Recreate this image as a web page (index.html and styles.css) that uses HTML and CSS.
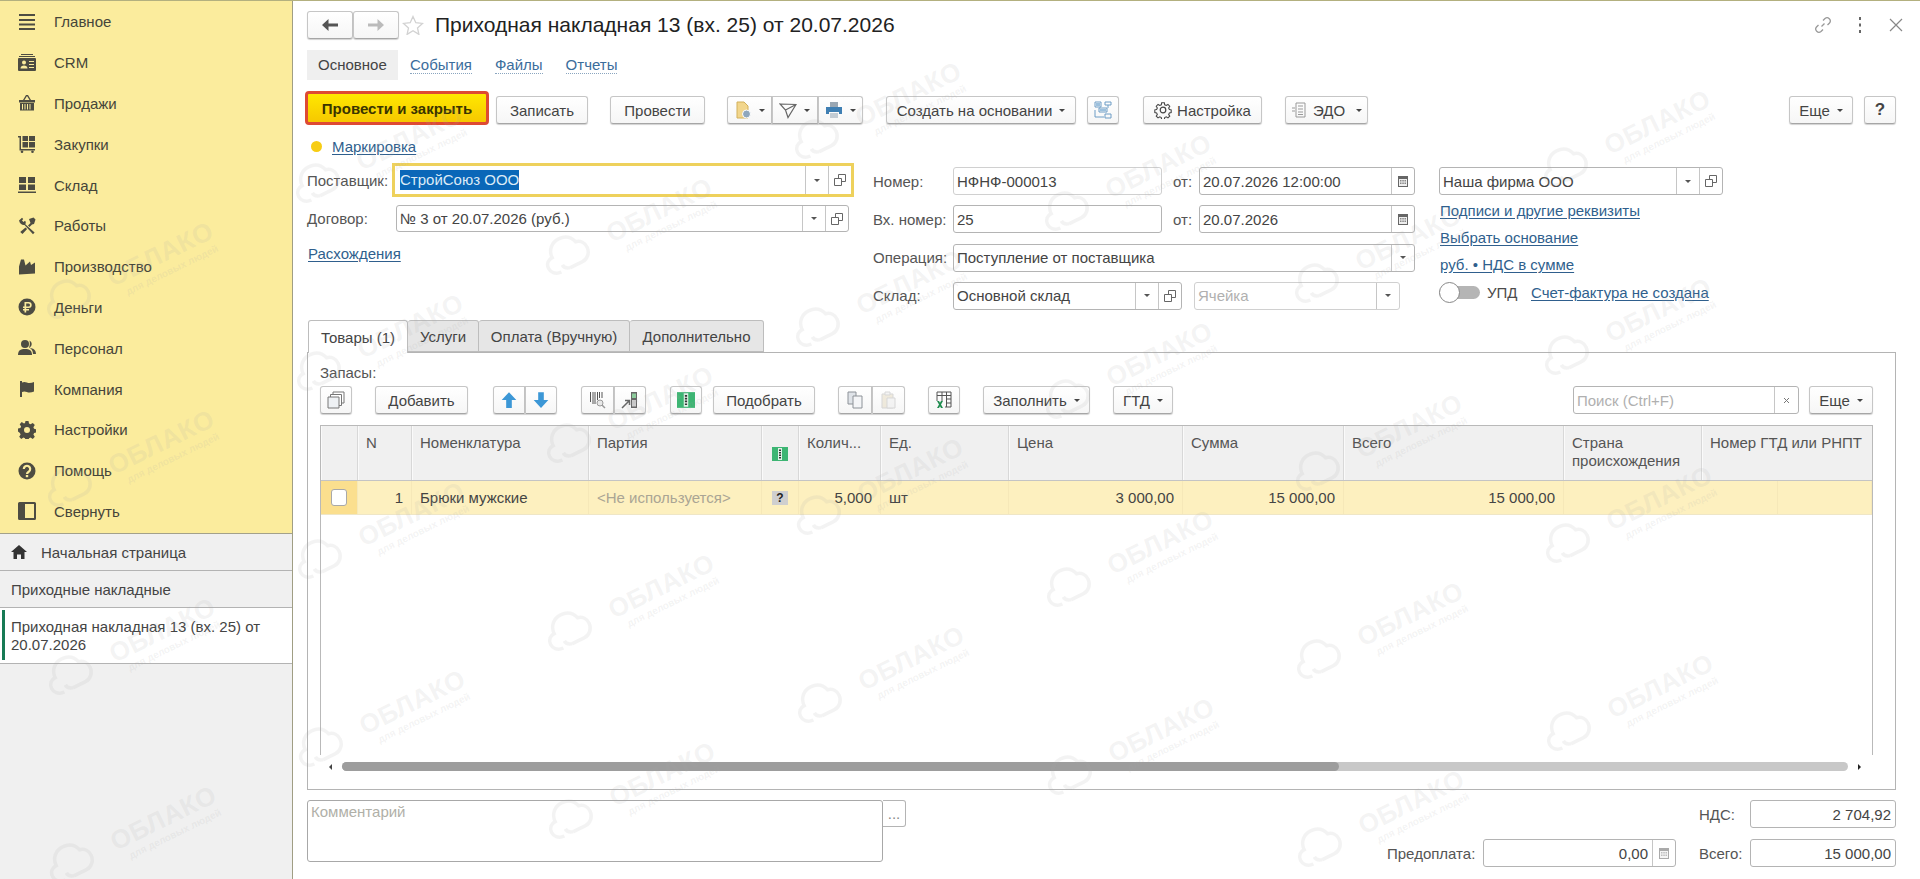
FILE: index.html
```html
<!DOCTYPE html>
<html lang="ru">
<head>
  <meta charset="UTF-8">
  <title>Приходная накладная 13</title>
  <link rel="stylesheet" href="styles.css">
</head>
<body>

  <aside class="sidebar">
    <nav class="menu">
      <a class="menu-item"><svg class="menu-icon" viewBox="0 0 18 18"><path d="M1 1h16v2H1zM1 6h16v2H1zM1 10.500h16v2H1zM1 15h16v2H1z"/></svg>Главное</a>
      <a class="menu-item"><svg class="menu-icon" viewBox="0 0 18 18"><path d="M3 0h12v1H3zM1 2h16v1H1z"/><path fill-rule="evenodd" d="M1 4h16a1 1 0 0 1 1 1v11a1 1 0 0 1-1 1H1a1 1 0 0 1-1-1V5a1 1 0 0 1 1-1zm5 2.500a2 2 0 1 0 0 4 2 2 0 0 0 0-4zM2.500 14.500h7c0-2-1.500-3-3.500-3s-3.500 1-3.500 3zM11 7v1h5V7zm0 3v1h5v-1zm0 3v1h5v-1z"/></svg>CRM</a>
      <a class="menu-item"><svg class="menu-icon" viewBox="0 0 18 18"><path d="M5 6l3-5h2l3 5h-1.500L9 2 6.500 6z"/><path fill-rule="evenodd" d="M1 6h16v2.500H1zM2 9h14v7.500H2zm2 1v5.500h1V10zm2.500 0v5.500h1V10zm2.500 0v5.500h1V10zm2.500 0v5.500h1V10z"/></svg>Продажи</a>
      <a class="menu-item"><svg class="menu-icon" viewBox="0 0 18 18"><path d="M0 1h3v13h14v1.500H1.500V2.500H0z"/><path d="M4.500 1h5.500v5H4.500zM11 1h6v5h-6zM4.500 7h5.500v5.500H4.500zM11 7h6v5.500h-6z"/><circle cx="4" cy="16.700" r="1.300"/><circle cx="14.500" cy="16.700" r="1.300"/></svg>Закупки</a>
      <a class="menu-item"><svg class="menu-icon" viewBox="0 0 18 18"><path d="M1 1h7v6H1zM10 1h7v6h-7zM1 8.500h7v5.500H1zM10 8.500h7v5.500h-7zM0 15.500h18V17H0z"/></svg>Склад</a>
      <a class="menu-item"><svg class="menu-icon" viewBox="0 0 18 18"><path d="M1 3.500L4 .8l1.200 1.200L4 3.500 5.500 5l1.500-1.200c1 1 1 2.400.3 3.400l9.300 8.300-1.600 1.700-8.500-9.200C5 8.500 2 7.500 1 3.500z"/><path d="M11 2l4.500-1.500 2 2L16 7l-2 .5-2.500 2.500-1.500-1.500L12.500 6zM7.500 10.500l1.600 1.600-4.600 5-2.300-2.200z"/></svg>Работы</a>
      <a class="menu-item"><svg class="menu-icon" viewBox="0 0 18 18"><path d="M1 16.500V8.500L3 1.500h3l1.500 6 4.500-4 1 3.500 4-2.500v11z"/></svg>Производство</a>
      <a class="menu-item"><svg class="menu-icon" viewBox="0 0 18 18"><circle cx="9" cy="9" r="8.500"/><path fill="#fbec9d" d="M6.500 4h4.200a3 3 0 0 1 0 6H8.200v1H11v1.400H8.200V14.500H6.500v-2.100H5V11h1.500v-1H5V8.500h1.500zm1.700 1.500v3h2.300a1.500 1.500 0 0 0 0-3z"/></svg>Деньги</a>
      <a class="menu-item"><svg class="menu-icon" viewBox="0 0 18 18"><circle cx="7" cy="5" r="4"/><path d="M0 16c0-4.500 2.500-6 7-6s7 1.500 7 6z"/><path d="M11.500 1.500a4 4 0 0 1 0 7.200c3.500.6 6.500 2 6.500 6.300h-3c0-3-1.500-5.500-4-6.500 1-2 1-4.500.5-7z"/></svg>Персонал</a>
      <a class="menu-item"><svg class="menu-icon" viewBox="0 0 18 18"><path d="M2 1h2v16H2z"/><path d="M4 2.500c3-1.500 5 .5 7.500.5 1.500 0 3-.5 4.500-1v9.500c-1.500.5-3 1-4.500 1-2.500 0-4.500-2-7.500-.5z"/></svg>Компания</a>
      <a class="menu-item"><svg class="menu-icon" viewBox="0 0 18 18"><path fill-rule="evenodd" d="M7.500 0h3l.5 2.600 1.500.7 2.300-1.400 2 2.100-1.400 2.200.7 1.600 2.400.7v3l-2.400.5-.7 1.600 1.400 2.200-2 2.100-2.300-1.400-1.500.7-.5 2.600h-3l-.5-2.600-1.500-.7-2.300 1.400-2-2.100 1.400-2.200-.7-1.600L0 10.500v-3l2.400-.5.7-1.600-1.400-2.200 2-2.100L6 2.500l1-.5zM9 6a3 3 0 1 0 0 6 3 3 0 0 0 0-6z"/></svg>Настройки</a>
      <a class="menu-item"><svg class="menu-icon" viewBox="0 0 18 18"><circle cx="9" cy="9" r="8.500"/><path fill="none" stroke="#fbec9d" stroke-width="2.200" d="M5.800 7a3.200 3.200 0 1 1 4.900 2.700c-1.100.7-1.700 1.200-1.700 2.300"/><path fill="#fbec9d" d="M7.800 13h2.400v2.200H7.800z"/></svg>Помощь</a>
      <a class="menu-item"><svg class="menu-icon" viewBox="0 0 18 18"><path fill-rule="evenodd" d="M1.500 0h15A1.500 1.500 0 0 1 18 1.500v15a1.500 1.500 0 0 1-1.500 1.500h-15A1.500 1.500 0 0 1 0 16.500v-15A1.500 1.500 0 0 1 1.500 0zM7 2v14h9V2z"/></svg>Свернуть</a>
    </nav>
    <div class="open-list">
      <a class="open-item"><svg class="home-icon" viewBox="0 0 16 14"><path d="M8 0l8 7h-2.500v7h-3.500v-4.500H6V14H2.500V7H0z"/></svg>Начальная страница</a>
      <a class="open-item">Приходные накладные</a>
      <a class="open-item open-item-active">Приходная накладная 13 (вх. 25) от 20.07.2026</a>
    </div>
  </aside>

  <main class="main">
    <div class="title-row">
      <div class="nav-arrows">
        <button class="btn arrow-btn"><svg width="16" height="12" viewBox="0 0 16 12"><path fill="#555" d="M6.500 0v4.500H16v3H6.500V12L0 6z"/></svg></button>
        <button class="btn arrow-btn arrow-off"><svg width="16" height="12" viewBox="0 0 16 12"><path fill="#bbb" d="M9.500 0v4.500H0v3h9.500V12L16 6z"/></svg></button>
      </div>
      <svg class="star" viewBox="0 0 22 20"><path fill="none" stroke="#d2d2d2" stroke-width="1.300" d="M11 1.500l2.800 6.200 6.700.7-5 4.500 1.400 6.500L11 15.700l-5.900 3.700 1.400-6.500-5-4.500 6.700-.7z"/></svg>
      <h1 class="doc-title">Приходная накладная 13 (вх. 25) от 20.07.2026</h1>
      <div class="window-tools">
        <svg class="tool-link" viewBox="0 0 18 18"><path fill="none" stroke="#999" stroke-width="1.300" d="M7.500 10.500l3-3M9 4.500l2-2a3.200 3.200 0 0 1 4.500 4.500l-2 2M9 13.500l-2 2A3.200 3.200 0 0 1 2.500 11l2-2"/></svg>
        <svg class="tool-dots" viewBox="0 0 4 16"><path fill="#666" d="M1 0h2v3H1zM1 6.500h2v3H1zM1 13h2v3H1z"/></svg>
        <svg class="tool-close" viewBox="0 0 14 14"><path fill="none" stroke="#888" stroke-width="1.200" d="M1 1l12 12M13 1L1 13"/></svg>
      </div>
    </div>

    <div class="section-tabs">
      <a class="section-tab section-tab-active">Основное</a>
      <a class="section-tab st-events">События</a>
      <a class="section-tab st-files">Файлы</a>
      <a class="section-tab st-reports">Отчеты</a>
    </div>

    <div class="commands">
      <button class="btn btn-primary">Провести и закрыть</button>
      <button class="btn c-save">Записать</button>
      <button class="btn c-post">Провести</button>
      <div class="btn-group c-group">
        <button class="btn btn-icon-caret"><svg class="ico" viewBox="0 0 18 18"><path fill="#f2d68c" stroke="#d2b05a" d="M3 1h7l4 4v12H3z"/><circle cx="12.500" cy="13" r="4" fill="#8fa7bd" stroke="#fff"/></svg><i class="caret"></i></button>
        <button class="btn btn-icon-caret"><svg class="ico" viewBox="0 0 18 18"><path fill="none" stroke="#666" stroke-width="1.200" d="M1 3l16 .5-8 13-2.500-7.500zM6.500 9L17 3.500"/></svg><i class="caret"></i></button>
        <button class="btn btn-icon-caret"><svg class="ico" viewBox="0 0 18 18"><path fill="#9aa7b3" d="M5 1h8v5H5z"/><path fill="#3f7fb3" d="M1 6h16v7h-3v-2H4v2H1z"/><path fill="#c3ccd4" d="M5 12h8v5H5z"/></svg><i class="caret"></i></button>
      </div>
      <button class="btn c-create">Создать на основании<i class="caret"></i></button>
      <button class="btn btn-square c-struct"><svg class="ico" viewBox="0 0 18 18"><path fill="none" stroke="#6d9cc5" d="M1 1h6v5H1zM11 1h6v3h-6zM5 7h8v4H5zM11 13h6v4h-6zM1 9v7h9M14 4v3"/><path fill="#9cc0dd" d="M2 2h4v3H2zM6 8h6v2H6z"/></svg></button>
      <button class="btn c-settings"><svg class="ico" viewBox="0 0 18 18"><path fill="none" stroke="#444" stroke-width="1.200" d="M7.500 1h3l.4 2.200 1.700.8 1.900-1.200 2 2-1.200 1.900.8 1.700 2 .4v3l-2 .4-.8 1.700 1.200 1.900-2 2-1.900-1.200-1.700.8-.4 2.200h-3l-.4-2.200-1.700-.8-1.900 1.200-2-2 1.200-1.900-.8-1.700-2-.4v-3l2-.4.8-1.700-1.200-1.900 2-2 1.900 1.200 1.700-.8z" transform="translate(.9 .9) scale(.9)"/><circle cx="9" cy="9" r="2.800" fill="none" stroke="#444" stroke-width="1.200"/></svg>Настройка</button>
      <button class="btn c-edo"><svg class="ico" viewBox="0 0 18 18"><path fill="none" stroke="#999" d="M5 2h9v14H5zM7 5h5M7 8h5M7 11h5M7 13.500h5M1 7h3M1 10h3"/></svg>ЭДО<i class="caret"></i></button>
      <button class="btn c-more">Еще<i class="caret"></i></button>
      <button class="btn btn-square c-help"><b>?</b></button>
    </div>

    <div class="mark-row">
      <i class="mark-dot"></i>
      <a class="link">Маркировка</a>
    </div>

    <div class="form">
      <div class="form-col col-left">
        <div class="row-supplier">
          <label class="lbl lbl-supplier">Поставщик:</label>
          <div class="field field-focus">
            <span class="field-text"><span class="selected">СтройСоюз ООО</span></span>
            <span class="field-btn"><i class="caret"></i></span>
            <span class="field-btn"><svg class="open-ico" viewBox="0 0 12 12"><use href="#open"/></svg></span>
          </div>
        </div>
        <div class="row-contract">
          <label class="lbl lbl-contract">Договор:</label>
          <div class="field field-contract">
            <span class="field-text">№ 3 от 20.07.2026 (руб.)</span>
            <span class="field-btn"><i class="caret"></i></span>
            <span class="field-btn"><svg class="open-ico" viewBox="0 0 12 12"><use href="#open"/></svg></span>
          </div>
        </div>
        <a class="link link-diff">Расхождения</a>
      </div>

      <div class="form-col col-mid">
        <div class="mid-row">
          <label class="lbl lbl-mid">Номер:</label>
          <div class="field field-num field-readonly"><span class="field-text">НФНФ-000013</span></div>
          <label class="lbl lbl-from">от:</label>
          <div class="field field-date">
            <span class="field-text">20.07.2026 12:00:00</span>
            <span class="field-btn"><svg class="cal-ico" viewBox="0 0 12 12"><use href="#cal"/></svg></span>
          </div>
        </div>
        <div class="mid-row">
          <label class="lbl lbl-mid">Вх. номер:</label>
          <div class="field field-num"><span class="field-text">25</span></div>
          <label class="lbl lbl-from">от:</label>
          <div class="field field-date">
            <span class="field-text">20.07.2026</span>
            <span class="field-btn"><svg class="cal-ico" viewBox="0 0 12 12"><use href="#cal"/></svg></span>
          </div>
        </div>
        <div class="mid-row">
          <label class="lbl lbl-mid">Операция:</label>
          <div class="field field-op">
            <span class="field-text">Поступление от поставщика</span>
            <span class="field-btn"><i class="caret"></i></span>
          </div>
        </div>
        <div class="mid-row">
          <label class="lbl lbl-mid">Склад:</label>
          <div class="field field-store">
            <span class="field-text">Основной склад</span>
            <span class="field-btn"><i class="caret"></i></span>
            <span class="field-btn"><svg class="open-ico" viewBox="0 0 12 12"><use href="#open"/></svg></span>
          </div>
          <div class="field field-cell field-readonly">
            <span class="field-text placeholder">Ячейка</span>
            <span class="field-btn"><i class="caret"></i></span>
          </div>
        </div>
      </div>

      <div class="form-col col-right">
        <div class="field field-firm">
          <span class="field-text">Наша фирма ООО</span>
          <span class="field-btn"><i class="caret"></i></span>
          <span class="field-btn"><svg class="open-ico" viewBox="0 0 12 12"><use href="#open"/></svg></span>
        </div>
        <a class="link right-link">Подписи и другие реквизиты</a>
        <a class="link right-link">Выбрать основание</a>
        <a class="link right-link">руб. • НДС в сумме</a>
        <div class="upd-row">
          <span class="toggle"><i class="toggle-knob"></i></span>
          <span class="upd-label">УПД</span>
          <a class="link">Счет-фактура не создана</a>
        </div>
      </div>
    </div>

    <div class="page-tabs">
      <a class="page-tab page-tab-active pt-goods">Товары (1)</a>
      <a class="page-tab pt-services">Услуги</a>
      <a class="page-tab pt-pay">Оплата (Вручную)</a>
      <a class="page-tab pt-extra">Дополнительно</a>
    </div>

    <section class="panel">
      <div class="panel-title">Запасы:</div>
      <div class="table-bar">
        <button class="btn btn-square b-stack"><svg class="ico" viewBox="0 0 18 18"><path fill="#fff" stroke="#777" d="M6 1h11v11H6z"/><path fill="#fff" stroke="#777" d="M3.500 3.500h11v11h-11z"/><path fill="#eef1f4" stroke="#777" d="M1 6h11v11H1z"/></svg></button>
        <button class="btn b-add">Добавить</button>
        <div class="btn-group b-move">
          <button class="btn btn-square"><svg class="ico" viewBox="0 0 14 16"><path fill="#3c97d6" d="M7 1l6.500 7H9.500v7h-5V8H.5z"/></svg></button>
          <button class="btn btn-square"><svg class="ico" viewBox="0 0 14 16"><path fill="#3c97d6" d="M7 15L.5 8h4V1h5v7h4z"/></svg></button>
        </div>
        <div class="btn-group b-scan">
          <button class="btn btn-square"><svg class="ico" viewBox="0 0 18 18"><path stroke="#555" d="M2.500 1v10M5 1v12M7 1v12M9.500 1v8M11.500 1v6M14 1v6"/><circle cx="12" cy="12" r="3" fill="#e8e8e8" stroke="#999"/><path stroke="#999" stroke-width="1.500" d="M14 14l3 3"/></svg></button>
          <button class="btn btn-square"><svg class="ico" viewBox="0 0 18 18"><path fill="#666" d="M10 1h6v16h-6z"/><path fill="#8ccb9b" d="M11 2.500h4v4.500h-4z"/><path fill="#ccc" d="M11 9h4v6.500h-4z"/><path fill="none" stroke="#666" stroke-width="1.500" d="M1 17l7-7M4 9.500h4.500V14"/></svg></button>
        </div>
        <button class="btn btn-square b-money"><svg class="ico" viewBox="0 0 16 16"><use href="#money"/></svg></button>
        <button class="btn b-pick">Подобрать</button>
        <div class="btn-group b-clip">
          <button class="btn btn-square"><svg class="ico" viewBox="0 0 18 18"><path fill="#dfe3e8" stroke="#8d9298" d="M2 1h8v12H2z"/><path fill="#f4f5f7" stroke="#8d9298" d="M7 5h9v12H7z"/></svg></button>
          <button class="btn btn-square"><svg class="ico ico-off" viewBox="0 0 18 18"><path fill="#e6dcc4" stroke="#bbb" d="M3 3h11v14H3z"/><path fill="#eee" stroke="#bbb" d="M6 1h5v3H6zM8 7h8v10H8z"/></svg></button>
        </div>
        <button class="btn btn-square b-excel"><svg class="ico" viewBox="0 0 18 18"><path fill="none" stroke="#555" d="M2 1h14v15H10M2 1v9M2 4.500h14M7 1v9M11.500 1v15M11.500 8H16M11.500 12H16"/><path fill="#1d8c4e" d="M2 10h2l1 1.800L6 10h2l-2 3.500L8 17H6l-1-1.800L4 17H2l2-3.500z"/></svg></button>
        <button class="btn b-fill">Заполнить<i class="caret"></i></button>
        <button class="btn b-gtd">ГТД<i class="caret"></i></button>
        <div class="field field-search">
          <span class="field-text placeholder">Поиск (Ctrl+F)</span>
          <span class="field-btn"><svg class="clear-ico" viewBox="0 0 7 7"><path fill="none" stroke="#777" d="M1 1l5 5M6 1L1 6"/></svg></span>
        </div>
        <button class="btn b-more">Еще<i class="caret"></i></button>
      </div>

      <div class="grid-table">
        <div class="t-head">
          <div class="th"></div>
          <div class="th">N</div>
          <div class="th">Номенклатура</div>
          <div class="th">Партия</div>
          <div class="th th-icon"><svg class="money-ico" viewBox="0 0 16 16"><use href="#money"/></svg></div>
          <div class="th">Колич...</div>
          <div class="th">Ед.</div>
          <div class="th">Цена</div>
          <div class="th">Сумма</div>
          <div class="th">Всего</div>
          <div class="th">Страна происхождения</div>
          <div class="th">Номер ГТД или РНПТ</div>
        </div>
        <div class="t-row">
          <div class="td td-check"><i class="checkbox"></i></div>
          <div class="td td-num">1</div>
          <div class="td">Брюки мужские</div>
          <div class="td td-muted">&lt;Не используется&gt;</div>
          <div class="td td-center"><b class="unknown">?</b></div>
          <div class="td td-num">5,000</div>
          <div class="td">шт</div>
          <div class="td td-num">3 000,00</div>
          <div class="td td-num">15 000,00</div>
          <div class="td td-num">15 000,00</div>
          <div class="td"></div>
          <div class="td"></div>
        </div>
      </div>

      <div class="h-scroll">
        <i class="scroll-left"></i>
        <div class="scroll-track"><div class="scroll-thumb"></div></div>
        <i class="scroll-right"></i>
      </div>
    </section>

    <div class="footer">
      <div class="comment">Комментарий</div>
      <button class="comment-more">...</button>
      <div class="totals">
        <span class="total-blank"></span>
        <span class="total-blank"></span>
        <label class="lbl total-lbl">НДС:</label>
        <div class="field"><span class="field-text field-right">2 704,92</span></div>
        <label class="lbl">Предоплата:</label>
        <div class="field">
          <span class="field-text field-right">0,00</span>
          <span class="field-btn"><svg class="cal-ico ico-off" viewBox="0 0 12 12"><use href="#cal"/></svg></span>
        </div>
        <label class="lbl total-lbl">Всего:</label>
        <div class="field"><span class="field-text field-right">15 000,00</span></div>
      </div>
    </div>
  </main>

  <div class="watermarks" id="watermarks"></div>

  <svg class="defs" width="0" height="0">
    <symbol id="open" viewBox="0 0 12 12"><path fill="#fff" stroke="#666" d="M4.500 .5h7v7h-7z"/><path fill="#fff" stroke="#666" d="M.5 4.500h7v7h-7z"/></symbol>
    <symbol id="cal" viewBox="0 0 12 12"><path fill="#666" d="M1 1h10v11H1z"/><path fill="#eee" d="M2 4h8v7H2z"/><path fill="#888" d="M3 5h1.500v1.500H3zM5.300 5h1.500v1.500H5.300zM7.500 5H9v1.500H7.500zM3 7.500h1.500V9H3zM5.300 7.500h1.500V9H5.300zM7.500 7.500H9V9H7.500z"/></symbol>
    <symbol id="money" viewBox="0 0 16 16"><path fill="#3db573" d="M0 1h16v14H0z"/><path fill="#dff3e7" d="M6 2h4v12H6z"/><path fill="#333" d="M7 3.500h2V5H7zM7 6h2v1.500H7zM7 8.500h2V10H7zM7 11h2v1.500H7z"/></symbol>
    <symbol id="cloud" viewBox="0 0 48 38"><path fill="none" stroke="currentColor" stroke-width="3.500" d="M12 34C5 34 2 29 2 25c0-5 4-8 8-8 0-8 6-14 14-14 7 0 12 4 14 10 5 1 8 5 8 10 0 6-5 11-11 11H22M22 34c-4-1-6-3-6-6"/></symbol>
  </svg>

  <script src="watermarks.js"></script>
</body>
</html>
```

FILE: styles.css
```css
* {
  box-sizing: border-box;
}

body {
  margin: 0;
  height: 100vh;
  display: flex;
  overflow: hidden;
  position: relative;
  background: white;
  border-top: 1px solid #b3b07f;
  font-family: "Liberation Sans", Arial, sans-serif;
  font-size: 15px;
  color: #4b4b4b;
}

/* left menu */
.sidebar {
  width: 293px;
  flex: none;
  display: flex;
  flex-direction: column;
  background: #f0f0f0;
  border-right: 1px solid #a09e84;
}

.menu {
  background: #fbec9d;
  height: 533px;
  padding-top: 0.500px;
  display: grid;
  grid-auto-rows: 40.800px;
  border-bottom: 1px solid #a3a18a;
}

.menu-item {
  display: flex;
  align-items: center;
  gap: 18px;
  padding-left: 18px;
  color: #45453a;
}

.menu-icon {
  width: 18px;
  height: 18px;
  fill: #4d4c42;
}

.open-item {
  display: flex;
  align-items: center;
  height: 37px;
  padding: 0 24px 0 11px;
  border-bottom: 1px solid #b3b3b3;
  color: #444;
}

.home-icon {
  width: 16px;
  height: 14px;
  margin-right: 14px;
  fill: #333;
}

.open-item-active {
  height: 56px;
  background: white;
  line-height: 18px;
  position: relative;
}

.open-item-active::before {
  content: "";
  position: absolute;
  left: 2px;
  top: 2px;
  bottom: 3px;
  width: 3px;
  background: #177a55;
}

/* main form */
.main {
  flex: 1;
  min-width: 0;
  padding: 0 24px 0 14px;
}

.title-row {
  display: flex;
  align-items: center;
  height: 26px;
  margin-top: 11px;
}

.nav-arrows {
  display: flex;
  width: 83px;
}

.arrow-btn {
  flex: 1;
  height: 26px;
  padding: 0;
  border-radius: 3px 0 0 3px;
}

.arrow-off {
  border-radius: 0 3px 3px 0;
  border-left: none;
}

.star {
  width: 22px;
  height: 20px;
  margin-left: 12px;
}

.doc-title {
  margin: 0 0 0 11px;
  font-size: 21px;
  font-weight: normal;
  color: #222;
  white-space: nowrap;
}

.window-tools {
  margin-left: auto;
  display: flex;
  align-items: center;
}

.tool-link {
  width: 18px;
  height: 18px;
  margin-right: 26px;
}

.tool-dots {
  width: 4px;
  height: 16px;
  margin-right: 27px;
}

.tool-close {
  width: 14px;
  height: 14px;
  margin-right: -7px;
}

.section-tabs {
  display: flex;
  align-items: center;
  height: 30px;
  margin-top: 12px;
}

.section-tab {
  color: #3b6d9c;
  border-bottom: 1px dotted #8aa5bf;
  line-height: 16px;
}

.section-tab-active {
  display: flex;
  align-items: center;
  width: 91px;
  height: 30px;
  padding-left: 11px;
  background: #efefef;
  border: none;
  color: #444;
}

.st-events { margin-left: 12px; }
.st-files { margin-left: 23px; }
.st-reports { margin-left: 23px; }

/* buttons */
.btn {
  height: 28px;
  padding: 0 14px;
  display: inline-flex;
  align-items: center;
  justify-content: center;
  flex: none;
  font: inherit;
  color: #444;
  white-space: nowrap;
  background: linear-gradient(#ffffff, #f6f6f6);
  border: 1px solid #c6c6c6;
  border-bottom-color: #a6a6a6;
  border-radius: 3px;
  box-shadow: 0 1px 1px rgba(0, 0, 0, 0.18);
}

.btn-square {
  padding: 0;
}

.btn-group {
  display: flex;
  flex: none;
}

.btn-group .btn {
  flex: 1;
  padding: 0;
  border-radius: 0;
}

.btn-group .btn:first-child {
  border-radius: 3px 0 0 3px;
}

.btn-group .btn:last-child {
  border-radius: 0 3px 3px 0;
  border-left: none;
}

.btn-group .btn + .btn {
  border-left: 1px solid #c6c6c6;
}

.ico {
  width: 18px;
  height: 18px;
  flex: none;
}

.ico-off {
  opacity: 0.55;
}

.caret {
  display: inline-block;
  flex: none;
  width: 0;
  height: 0;
  margin-left: 7px;
  border-left: 3px solid transparent;
  border-right: 3px solid transparent;
  border-top: 3px solid #444;
}

.commands {
  display: flex;
  align-items: flex-start;
  height: 34px;
  margin-top: 11px;
}

.commands .btn:not(.btn-primary),
.commands .btn-group {
  margin-top: 5px;
}

.commands .btn-group .btn {
  margin-top: 0;
}

.btn-primary {
  width: 184px;
  height: 34px;
  margin-left: -2px;
  padding: 0;
  font-weight: bold;
  color: #3a3400;
  background: linear-gradient(#ffe800, #f6c800);
  border: 3px solid #de4a33;
  border-radius: 4px;
  box-shadow: none;
}

.c-save { width: 92px; margin-left: 7px; }
.c-post { width: 95px; margin-left: 22px; }
.c-group { width: 136px; margin-left: 22px; }
.c-create { width: 190px; margin-left: 23px; padding: 0; }
.c-struct { width: 32px; margin-left: 11px; }
.c-settings { width: 119px; margin-left: 24px; padding: 0; gap: 5px; }
.c-edo { width: 83px; margin-left: 23px; padding: 0; gap: 4px; }
.c-more { width: 64px; margin-left: auto; padding: 0; }
.c-help { width: 32px; margin-left: 11px; font-size: 17px; }

.mark-row {
  display: flex;
  align-items: center;
  height: 20px;
  margin-top: 11px;
}

.mark-dot {
  width: 11px;
  height: 11px;
  margin-left: 4px;
  border-radius: 50%;
  background: #f7cd14;
}

.link {
  color: #2f5f8d;
  text-decoration: underline;
  text-underline-offset: 2px;
}

.mark-row .link {
  margin-left: 10px;
}

/* form fields */
.form {
  display: flex;
  height: 157px;
  margin-top: 7px;
}

.col-left {
  width: 547px;
}

.col-mid {
  width: 542px;
  margin-left: 19px;
  padding-top: 4px;
  display: flex;
  flex-direction: column;
  gap: 10.300px;
}

.col-right {
  width: 284px;
  margin-left: 24px;
  padding-top: 4px;
  display: flex;
  flex-direction: column;
}

.lbl {
  color: #555;
  white-space: nowrap;
}

.field {
  display: flex;
  height: 28px;
  background: white;
  border: 1px solid #b4b4b4;
  border-radius: 3px;
  color: #444;
}

.field-text {
  flex: 1;
  min-width: 0;
  display: flex;
  align-items: center;
  padding-left: 3px;
  white-space: nowrap;
  overflow: hidden;
}

.field-right {
  justify-content: flex-end;
  padding-right: 4px;
}

.field-btn {
  width: 23px;
  flex: none;
  display: flex;
  align-items: center;
  justify-content: center;
  border-left: 1px solid #c6c6c6;
}

.field-btn .caret {
  margin-left: 0;
  border-top-color: #555;
}

.open-ico {
  width: 12px;
  height: 12px;
}

.cal-ico {
  width: 12px;
  height: 12px;
}

.clear-ico {
  width: 7px;
  height: 7px;
}

.placeholder {
  color: #b0b0b0;
}

.field-readonly {
  border-color: #d0d0d0;
}

.row-supplier {
  display: flex;
  align-items: center;
}

.lbl-supplier {
  width: 85px;
}

.field-focus {
  flex: 1;
  height: 34px;
  border: 3px solid #eed15c;
  border-radius: 0;
}

.field-focus .field-text {
  padding-left: 5px;
}

.selected {
  background: #0a67b8;
  color: #dcebf7;
  line-height: 20px;
}

.row-contract {
  display: flex;
  align-items: center;
  margin-top: 8px;
}

.lbl-contract {
  width: 89px;
}

.field-contract {
  width: 453px;
  height: 27px;
}

.link-diff {
  display: block;
  width: max-content;
  margin-top: 13px;
  margin-left: 1px;
}

.mid-row {
  display: flex;
  align-items: center;
}

.lbl-mid {
  width: 80px;
}

.field-num {
  width: 209px;
}

.lbl-from {
  width: 37px;
  padding-left: 11px;
}

.field-date {
  width: 216px;
}

.field-op {
  width: 462px;
}

.field-store {
  width: 229px;
}

.field-cell {
  width: 206px;
  margin-left: 12px;
}

.field-firm {
  width: 284px;
}

.right-link {
  display: block;
  width: max-content;
  margin-left: 1px;
  line-height: 16px;
  margin-top: 11px;
}

.field-firm + .right-link {
  margin-top: 8px;
}

.upd-row {
  display: flex;
  align-items: center;
  height: 21px;
  margin-top: 9px;
}

.toggle {
  position: relative;
  width: 41px;
  height: 13px;
  border-radius: 7px;
  background: #b5b5b5;
}

.toggle-knob {
  position: absolute;
  left: 0;
  top: -4px;
  width: 21px;
  height: 21px;
  border-radius: 50%;
  background: white;
  border: 1px solid #888;
}

.upd-label {
  margin-left: 7px;
  width: 44px;
}

/* tabs and table */
.page-tabs {
  display: flex;
  height: 33px;
  margin-left: 1px;
  margin-bottom: -1px;
  position: relative;
}

.page-tab {
  display: flex;
  align-items: center;
  justify-content: center;
  height: 32px;
  background: #e6e6e6;
  border: 1px solid #bdbdbd;
  border-left: none;
  border-radius: 3px 3px 0 0;
  color: #444;
}

.page-tab-active {
  height: 33px;
  background: white;
  border-left: 1px solid #bdbdbd;
  border-bottom: none;
}

.pt-goods { width: 100px; }
.pt-services { width: 71px; }
.pt-pay { width: 151px; }
.pt-extra { width: 134px; }

.panel {
  height: 438px;
  padding: 10px 22px 0 12px;
  border: 1px solid #b4b4b4;
}

.panel-title {
  height: 20px;
  line-height: 20px;
  color: #555;
}

.table-bar {
  display: flex;
  align-items: center;
  margin-top: 3px;
}

.b-stack { width: 32px; }
.b-add { width: 93px; margin-left: 23px; padding: 0; }
.b-move { width: 64px; margin-left: 25px; }
.b-scan { width: 65px; margin-left: 24px; }
.b-money { width: 32px; margin-left: 24px; }
.b-pick { width: 102px; margin-left: 11px; padding: 0; }
.b-clip { width: 67px; margin-left: 23px; }
.b-excel { width: 32px; margin-left: 23px; }
.b-fill { width: 107px; margin-left: 23px; padding: 0; }
.b-gtd { width: 60px; margin-left: 23px; padding: 0; }
.field-search { width: 226px; margin-left: auto; }
.b-more { width: 64px; margin-left: 10px; padding: 0; }

.field-search .field-btn {
  width: 24px;
}

.grid-table {
  height: 330px;
  margin-top: 11px;
  border: 1px solid #b9b9b9;
  border-bottom: none;
}

.t-head,
.t-row {
  display: grid;
  grid-template-columns: 37px 54px 177px 173px 37px 82px 128px 174px 161px 220px 138px 170px;
}

.t-head {
  height: 55px;
  background: #f0f0f0;
  border-bottom: 1px solid #c4c4c4;
}

.th {
  padding: 8px 7px 0 8px;
  line-height: 18px;
  border-right: 1px solid #d8d8d8;
  box-shadow: inset 1px 0 0 #fafafa;
  color: #555;
  white-space: normal;
}

.th:last-child {
  border-right: none;
  white-space: nowrap;
}

.th-icon {
  padding: 20px 0 0 10px;
}

.money-ico {
  display: block;
  width: 16px;
  height: 16px;
}

.t-row {
  height: 34px;
  background: #fdf0bf;
  border-bottom: 1px solid #efe6c6;
  grid-template-columns: 37px 54px 177px 173px 37px 82px 128px 174px 161px 220px 214px 94px;
}

.td {
  display: flex;
  align-items: center;
  padding: 0 8px;
  border-right: 1px solid #f6e8b8;
  color: #444;
  white-space: nowrap;
}

.td-num {
  justify-content: flex-end;
}

.td-center {
  justify-content: center;
  padding: 0;
}

.td-muted {
  color: #aaa594;
}

.td-check {
  justify-content: center;
  padding: 0;
  background: #fbdf8e;
}

.checkbox {
  width: 16px;
  height: 17px;
  background: white;
  border: 1px solid #a9a9a9;
  border-radius: 3px;
}

.unknown {
  width: 16px;
  height: 14px;
  font-size: 12px;
  line-height: 14px;
  text-align: center;
  color: #222;
  background: #cfcfcf;
}

.h-scroll {
  display: flex;
  align-items: center;
  height: 9px;
  margin-top: 7px;
}

.scroll-left,
.scroll-right {
  width: 0;
  height: 0;
  border-top: 3px solid transparent;
  border-bottom: 3px solid transparent;
}

.scroll-left {
  margin-left: 9px;
  border-right: 3px solid #444;
}

.scroll-right {
  margin-left: 10px;
  border-left: 3px solid #222;
}

.scroll-track {
  width: 1506px;
  height: 9px;
  margin-left: 10px;
  border-radius: 5px;
  background: #c8c8c8;
}

.scroll-thumb {
  width: 66.200%;
  height: 9px;
  border-radius: 5px;
  background: #9d9d9d;
}

/* bottom block */
.footer {
  display: flex;
  align-items: flex-start;
  margin-top: 10px;
}

.comment {
  width: 576px;
  height: 62px;
  padding: 2px 3px;
  border: 1px solid #a8a8a8;
  border-radius: 3px;
  color: #b0b0a8;
}

.comment-more {
  width: 23px;
  height: 27px;
  padding: 0;
  background: white;
  border: 1px solid #b4b4b4;
  border-left: none;
  border-radius: 0 3px 3px 0;
  font: inherit;
  color: #888;
}

.totals {
  margin-left: auto;
  display: grid;
  grid-template-columns: 96px 193px 74px 146px;
  grid-auto-rows: 28px;
  row-gap: 11px;
  align-items: center;
}

.total-lbl {
  padding-left: 23px;
}

/* watermark layer */
.watermarks {
  position: absolute;
  inset: 0;
  overflow: hidden;
  pointer-events: none;
  color: rgba(170, 170, 170, 0.14);
}

.wm {
  position: absolute;
  width: 0;
  height: 0;
  transform: rotate(-26deg);
}

.wm-cloud {
  position: absolute;
  left: -122px;
  top: -22px;
  width: 48px;
  height: 38px;
}

.wm-name {
  position: absolute;
  left: -52px;
  top: -16px;
  font-size: 26px;
  line-height: 30px;
  font-weight: bold;
  letter-spacing: 0.5px;
  white-space: nowrap;
}

.wm-sub {
  position: absolute;
  left: -42px;
  top: 13px;
  font-size: 10px;
  line-height: 12px;
  font-weight: bold;
  white-space: nowrap;
}

.defs {
  position: absolute;
}
```

FILE: watermarks.js
```js
// the "cloud" watermark repeats over the whole page on a slanted lattice
const layer = document.getElementById('watermarks');

for (let i = -4; i <= 6; i++) {
  for (let j = -6; j <= 4; j++) {
    const x = 907 + 250 * i + j;
    const y = 660 + 72 * i + 188 * j;
    if (x < 150 || x > 1840 || y < 70 || y > 820) continue;

    const mark = document.createElement('div');
    mark.className = 'wm';
    mark.style.left = x + 'px';
    mark.style.top = y + 'px';
    mark.innerHTML =
      '<svg class="wm-cloud"><use href="#cloud"/></svg>' +
      '<span class="wm-name">ОБЛАКО</span>' +
      '<span class="wm-sub">для деловых людей</span>';
    layer.appendChild(mark);
  }
}
```
